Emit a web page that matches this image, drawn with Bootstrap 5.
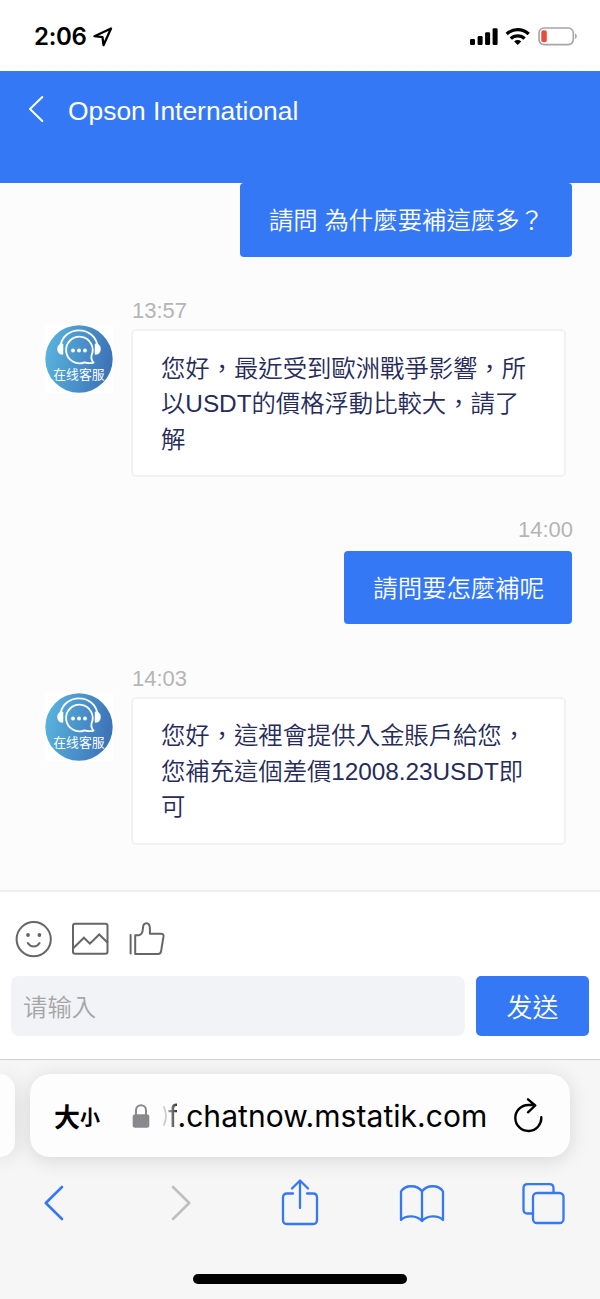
<!DOCTYPE html>
<html lang="zh-Hant">
<head>
<meta charset="utf-8">
<meta name="viewport" content="width=device-width, initial-scale=1">
<title>Opson International</title>
<link href="https://cdn.jsdelivr.net/npm/bootstrap@5.3.0/dist/css/bootstrap.min.css" rel="stylesheet">
<style>
  :root { --brand: #3478f6; }
  body { width: 600px; height: 1299px; overflow: hidden; background: #fff; font-family: "Liberation Sans", "Noto Sans CJK TC", sans-serif; }
  svg { display: block; flex: none; fill: none; stroke-linecap: round; stroke-linejoin: round; }
  .status { height: 71px; padding: 3px 23px 0 34px; }
  .clock { font: 600 24px/30px Inter, sans-serif; letter-spacing: -.3px; color: #000; }
  .topbar { height: 112px; background: var(--brand); padding: 19px 28px; }
  .topbar h1 { font-size: 26.4px; line-height: 42px; font-weight: 400; margin-left: 24px; }
  .chat { height: 707px; background: #fcfcfc; padding: 0 28px 0 45px; }
  .stamp { font-size: 22px; line-height: 26px; color: #b5b5b5; }
  .bubble { font-size: 24.4px; line-height: 35.6px; border-radius: 4px; white-space: nowrap; font-weight: 350; }
  .sent { background: var(--brand); color: #fff; height: 73.5px; padding: 20px 28px 0 29px; }
  .received { width: 435px; height: 148px; background: #fff; border: 2px solid #f2f2f3; color: #262b5a; padding: 19.500px 28px; border-radius: 5px; margin-left: -1px; letter-spacing: -.06px; }
  .received-row { gap: 19px; }
  .avatar { width: 68px; height: 68px; margin-top: 27px; background: #fff; }
  .composer { height: 169px; border-top: 2px solid #efefef; padding: 29px 11px 0; }
  .tools { height: 38px; padding-left: 4px; gap: 19px; }
  .entry { width: 454px; height: 60px; border-radius: 8px; background: #f2f3f7; border: 0; padding: 0 12px 2px; font: 350 24.4px "Noto Sans CJK SC", sans-serif; }
  .entry::placeholder { color: #a6a6a6; opacity: 1; }
  .send { width: 113px; height: 60px; border-radius: 5px; background: var(--brand); border: 0; color: #fff; font: 350 26px/58px "Noto Sans CJK SC", sans-serif; padding: 0; }
  .browser { height: 240px; background: #f6f6f7; border-top: 1px solid #cfcfd1; padding-top: 14px; overflow: hidden; }
  .addr { height: 83px; border-radius: 20px; background: #fdfdfd; box-shadow: 0 3px 20px rgba(0,0,0,.13); }
  .addr-prev { width: 15px; border-radius: 0 20px 20px 0; margin-right: 15px; }
  .addr-main { width: 540px; padding: 0 27px 0 24px; color: #000; }
  .size-lg, .size-sm { font-family: "Noto Sans CJK SC", sans-serif; font-weight: 600; line-height: 40px; }
  .size-lg { font-size: 26px; } .size-sm { font-size: 20px; padding-top: 3px; }
  .url { font: 400 30px/40px Inter, sans-serif; letter-spacing: .050px; white-space: nowrap; padding-top: 1px; }
  .url .fade-f { background: linear-gradient(90deg, #aaa, #333); -webkit-background-clip: text; background-clip: text; color: transparent; }
  .toolbar { padding: 22px 34px 0 43px; }
  .home { width: 214px; height: 10px; border-radius: 5px; background: #000; margin: 47px auto 0 193px; }
</style>
</head>
<body>
<svg width="0" height="0" class="position-absolute">
  <defs>
    <linearGradient id="sky" x1="0" y1=".2" x2="1" y2=".4"><stop stop-color="#59b5df"/><stop offset="1" stop-color="#3d73b8"/></linearGradient>
    <symbol id="agent" viewBox="0 0 68 68">
      <circle cx="34" cy="34" r="33.7" fill="url(#sky)"/>
      <path d="M15.500 20C20 .5 48 .5 52.500 20" stroke="#fff" stroke-width="1.900"/>
      <path d="M17.500 19.200v9.800c-6-.5-6-9.300 0-9.800zM50.500 19.200v9.800c6-.5 6-9.300 0-9.800z" fill="#fff" stroke="#fff" stroke-width="1.500"/>
      <path d="M46.500 30.500A13.300 13.300 0 1 0 39.500 37.300C42.500 38.300 45.500 38.400 48.600 37.600C46.800 35.800 46 33.500 46.500 30.500z" stroke="#fff" stroke-width="1.800"/>
      <g fill="#fff"><circle cx="28" cy="25.500" r="1.900"/><circle cx="34" cy="25.500" r="1.900"/><circle cx="40" cy="25.500" r="1.900"/></g>
      <text x="8.300" y="54" font-family="Noto Sans CJK SC, sans-serif" font-size="12.800" fill="#fff">在线客服</text>
    </symbol>
  </defs>
</svg>

<header class="status d-flex align-items-center">
  <span class="clock">2:06</span>
  <svg style="margin-left:6px" width="20" height="20" viewBox="0 0 20 20" stroke="#000" stroke-width="2.300"><path d="M18 1.500 1.500 9.200l8 1 1 8z"/></svg>
  <svg class="ms-auto" width="107" height="20" viewBox="0 0 107 20">
    <g fill="#000"><rect x="0" y="12" width="5" height="6" rx="1.300"/><rect x="7.600" y="9" width="5" height="9" rx="1.300"/><rect x="15.100" y="5.300" width="5" height="12.700" rx="1.300"/><rect x="22.600" y="1.300" width="5" height="16.700" rx="1.300"/></g>
    <g stroke="#000" stroke-width="3.300" stroke-linecap="butt"><path d="M36.700 7a16.200 16.200 0 0 1 22 0M40.800 11.600a10 10 0 0 1 13.800 0"/></g>
    <path d="M44.200 14.400a5 5 0 0 1 7 0l-3.500 3.700z" fill="#000"/>
    <rect x="69" y="1" width="34.300" height="16.600" rx="5" stroke="#a5a5a7" stroke-width="1.600"/>
    <rect x="71.300" y="3.300" width="5.500" height="12" rx="2" fill="#eb4d3d"/>
    <path d="M105 6.600c2.300.8 2.300 4.600 0 5.400z" fill="#a5a5a7"/>
  </svg>
</header>

<nav class="topbar d-flex align-items-start text-white">
  <svg width="16" height="40" viewBox="0 0 16 40" stroke="#fff" stroke-width="2"><path d="M14.300 7 2 19l12.300 12"/></svg>
  <h1 class="mb-0">Opson International</h1>
</nav>

<main class="chat">
  <div class="d-flex justify-content-end"><div class="bubble sent">請問 為什麼要補這麼多？</div></div>

  <div class="received-row d-flex" style="margin-top:41.500px">
    <svg class="avatar"><use href="#agent"/></svg>
    <div>
      <div class="stamp">13:57</div>
      <div class="bubble received" style="margin-top:5px">您好，最近受到歐洲戰爭影響，所<br>以USDT的價格浮動比較大，請了<br>解</div>
    </div>
  </div>

  <div class="d-flex flex-column align-items-end" style="margin-top:40px">
    <div class="stamp" style="margin-right:-1px">14:00</div>
    <div class="bubble sent" style="margin-top:7.500px">請問要怎麼補呢</div>
  </div>

  <div class="received-row d-flex" style="margin-top:41.500px">
    <svg class="avatar"><use href="#agent"/></svg>
    <div>
      <div class="stamp">14:03</div>
      <div class="bubble received" style="margin-top:5px">您好，這裡會提供入金賬戶給您，<br>您補充這個差價12008.23USDT即<br>可</div>
    </div>
  </div>
</main>

<section class="composer">
  <div class="tools d-flex" style="color:#666">
    <svg width="38" height="38" viewBox="0 0 38 38" stroke="currentColor" stroke-width="2"><circle cx="18.700" cy="18.200" r="17.100"/><path d="M12.800 22c3 4.600 8.800 4.600 11.800 0"/><g fill="currentColor" stroke="none"><circle cx="13" cy="14" r="1.900"/><circle cx="24.400" cy="14" r="1.900"/></g></svg>
    <svg width="38" height="38" viewBox="0 0 38 38" stroke="currentColor" stroke-width="2"><rect x="1" y="2.700" width="34.500" height="30" rx="2"/><path d="m1.500 27 10.400-10.300 6 6 9.300-9.200 8 7.800" stroke-linejoin="miter"/></svg>
    <svg width="38" height="38" viewBox="0 0 38 38" stroke="currentColor" stroke-width="2"><path d="M1.600 14v18.500M6.200 33V14.200h3.500c3.200-.2 4-3 4.200-6.700.2-7 6.800-7 7 0V12.700h11.300c2 0 2.500 1.300 2.300 2.800l-2.400 14.600c-.3 2-1.200 2.900-3 2.900z"/></svg>
  </div>
  <div class="d-flex justify-content-between" style="margin-top:17px">
    <input class="entry" type="text" placeholder="请输入">
    <button class="btn send">发送</button>
  </div>
</section>

<footer class="browser">
  <div class="d-flex">
    <div class="addr addr-prev"></div>
    <div class="addr addr-main d-flex align-items-center">
      <span class="size-lg">大</span><span class="size-sm">小</span>
      <svg style="margin-left:32px" width="18" height="26" viewBox="0 0 18 26"><path d="M4 12V7.300C4 .5 14 .5 14 7.300V12" stroke="#88888d" stroke-width="2"/><rect x=".7" y="11.300" width="16.600" height="13.500" rx="2.500" fill="#88888d"/></svg>
      <svg style="margin-left:13px" width="5" height="22" viewBox="0 0 5 22"><path d="M1 2q4 9 0 18" stroke="#ccc" stroke-width="1.800"/></svg>
      <span class="url"><span class="fade-f">f</span>.chatnow.mstatik.com</span>
      <svg class="ms-auto" width="29" height="36" viewBox="0 0 29 36" stroke="#000" stroke-width="2.400"><path d="M27.300 19.200A13 13 0 1 1 14.300 7H20M14 1.300l7.200 6.200-7.200 6.800"/></svg>
    </div>
  </div>
  <div class="toolbar d-flex" style="color:#3478f6">
    <svg width="22" height="46" viewBox="0 0 22 46" stroke="currentColor" stroke-width="2.600"><path d="M19 8 2.800 24 19 40"/></svg>
    <svg style="margin-left:105px" width="22" height="46" viewBox="0 0 22 46" stroke="#bfbfc0" stroke-width="2.600"><path d="m3 8 16.200 16L3 40"/></svg>
    <svg style="margin-left:89px" width="38" height="48" viewBox="0 0 38 48" stroke="currentColor" stroke-width="2.300"><path d="M12 14.500H6q-4 0-4 4v22.500q0 4 4 4h26q4 0 4-4V18.500q0-4-4-4h-6M19 29V2M11 9.500 19 1.500l8 8"/></svg>
    <svg style="margin-left:80px" width="46" height="46" viewBox="0 0 46 46" stroke="currentColor" stroke-width="2.300"><path d="M23 12.500C18.500 5.500 6 5.500 2 12.500V41c5-5 16-5 21 1 5-6 16-6 21-1V12.500C40 5.500 27.500 5.500 23 12.500zV42"/></svg>
    <svg style="margin-left:76px" width="44" height="46" viewBox="0 0 44 46" stroke="currentColor" stroke-width="2.300"><rect x="12" y="14" width="30.500" height="30" rx="4"/><path d="M11 34.500H6.500q-4 0-4-4V9.200q0-4 4-4h22q4 0 4 4V13"/></svg>
  </div>
  <div class="home"></div>
</footer>
<script src="https://cdn.jsdelivr.net/npm/bootstrap@5.3.0/dist/js/bootstrap.bundle.min.js"></script>
</body>
</html>
